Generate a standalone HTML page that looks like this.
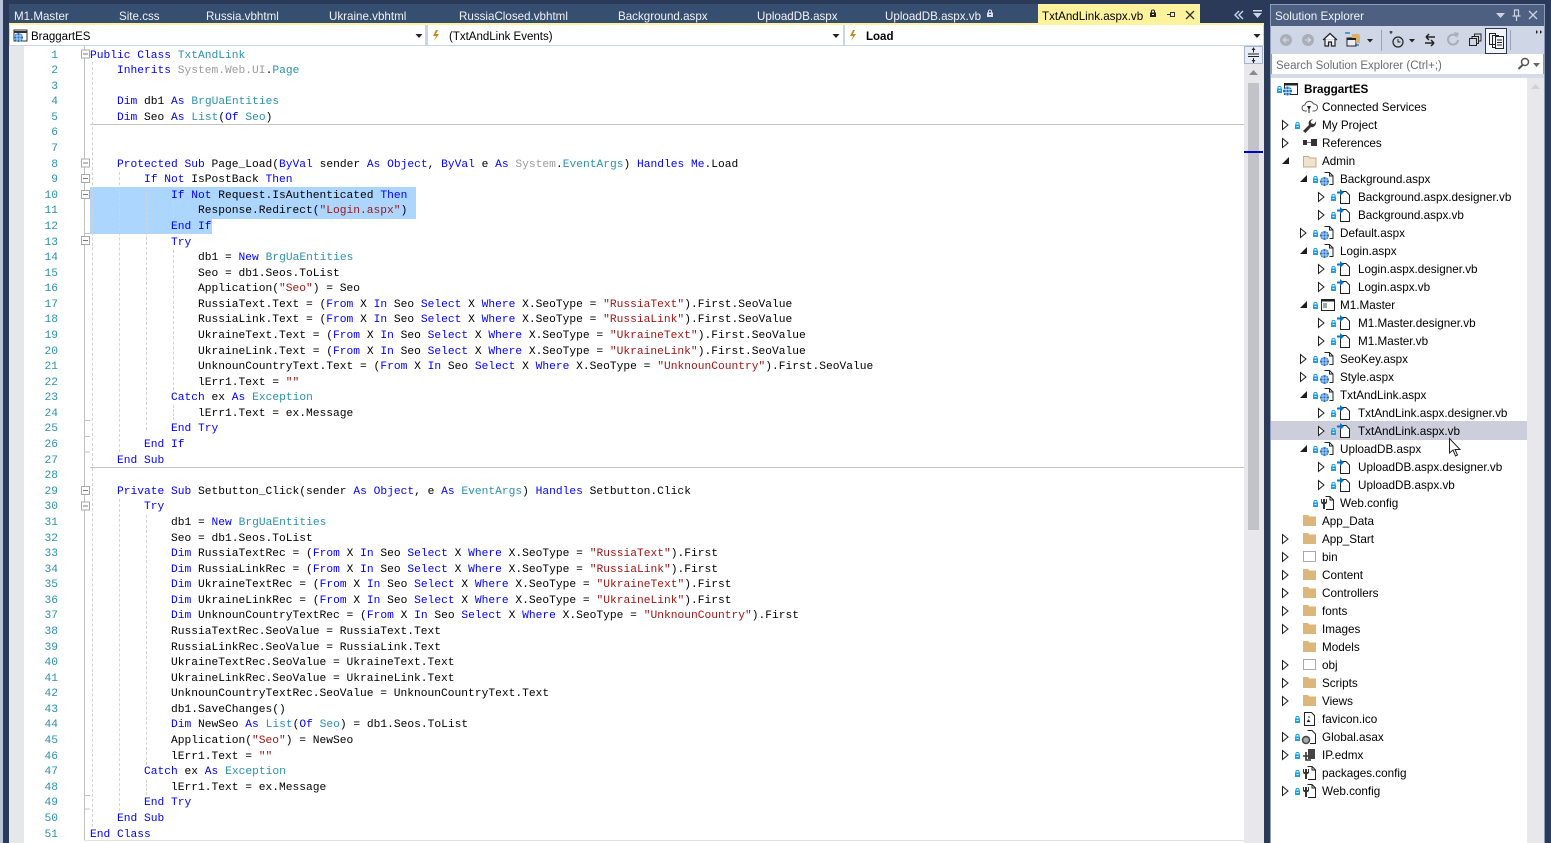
<!DOCTYPE html>
<html style="overflow:hidden;width:1551px;height:843px"><head><meta charset="utf-8"><title>TxtAndLink.aspx.vb</title>
<style>
html,body{margin:0;padding:0}
body{width:1551px;height:843px;overflow:hidden;position:relative;background:#2a3a58;font-family:"Liberation Sans",sans-serif;font-size:12px;color:#000}
.a{position:absolute}
.tab{position:absolute;top:9px;color:#f1f2f6;font-size:11.6px;line-height:15px;white-space:nowrap}
.dd{position:absolute;top:25px;height:20px;background:#fff;line-height:20px;font-size:11.5px;white-space:nowrap}
.dd span{top:1.5px}
#code,#nums{position:absolute;top:48.6px;font:11.25px/15.58px "Liberation Mono",monospace}
#code{left:90px;color:#000}
#code div,#nums div{height:15.58px;white-space:pre}
#nums{left:24px;width:34px;text-align:right;color:#2b91af}
.k{color:#0000ff}.t{color:#2b91af}.s{color:#a31515}.g{color:#9b9b9b}
#tree{position:absolute;left:1271px;top:81px;width:256px}
#tree div{height:18px;line-height:18px;white-space:nowrap;font-size:11.7px;color:#000}
.l0{padding-left:33px}.l1{padding-left:51px}.l2{padding-left:69px}.l3{padding-left:87px}
.d{position:absolute;width:0;border-left:1px dashed #d4d4d4}
</style></head><body>
<div class="a" style="left:0;top:0;width:3px;height:843px;background:#b9c4da"></div>
<div class="a" style="left:9px;top:4px;width:1029px;height:19px;background:#364e6f"></div>
<div class="a" style="left:1038px;top:4px;width:162px;height:19px;background:#fff29d"></div>
<div class="a" style="left:9px;top:23px;width:1255px;height:2px;background:#fff29d"></div>
<div class="tab" style="left:14px">M1.Master</div>
<div class="tab" style="left:119px">Site.css</div>
<div class="tab" style="left:206px">Russia.vbhtml</div>
<div class="tab" style="left:329px">Ukraine.vbhtml</div>
<div class="tab" style="left:459px">RussiaClosed.vbhtml</div>
<div class="tab" style="left:618px">Background.aspx</div>
<div class="tab" style="left:757px">UploadDB.aspx</div>
<div class="tab" style="left:885px">UploadDB.aspx.vb</div>
<div class="tab" style="left:1042px;color:#000">TxtAndLink.aspx.vb</div>

<div class="a" style="left:9px;top:25px;width:1255px;height:21px;background:#ccd5e8"></div>
<div class="dd" style="left:10px;width:415px"><span class="a" style="left:21px">BraggartES</span></div>
<div class="dd" style="left:428px;width:415px"><span class="a" style="left:21px">(TxtAndLink Events)</span></div>
<div class="dd" style="left:845px;width:418px"><span class="a" style="left:21px"><b style="font-weight:bold">Load</b></span></div>

<div class="a" style="left:9px;top:46px;width:1235px;height:797px;background:#fff"></div>
<div class="a" style="left:9px;top:46px;width:15px;height:797px;background:#e6e7e8"></div>
<div class="a" style="left:90px;top:187px;width:326px;height:31.5px;background:#add6ff"></div>
<div class="a" style="left:90px;top:218.5px;width:122px;height:15.5px;background:#add6ff"></div>
<div class="a" style="left:90px;top:124px;width:1154px;height:1px;background:#c4c4c4"></div>
<div class="a" style="left:90px;top:467px;width:1154px;height:1px;background:#c4c4c4"></div>
<div class="a" style="left:84px;top:46px;width:1px;height:795px;background:#c0c0c0"></div>
<div class="a" style="left:84px;top:840px;width:1160px;height:1px;background:#e2e2e2"></div>

<div class="d" style="left:92px;top:62px;height:765px"></div>
<div class="d" style="left:119px;top:172px;height:280px"></div>
<div class="d" style="left:119px;top:499px;height:312px"></div>
<div class="d" style="left:146px;top:187px;height:243px"></div>
<div class="d" style="left:146px;top:515px;height:250px"></div>
<div class="d" style="left:146px;top:780px;height:15px"></div>
<div class="d" style="left:173px;top:203px;height:15px"></div>
<div class="d" style="left:173px;top:250px;height:140px"></div>
<div class="d" style="left:173px;top:405px;height:15px"></div>

<svg class="a" style="left:0;top:0" width="1551" height="843" viewBox="0 0 1551 843">
<defs>
<g id="box"><rect x="0.5" y="0.5" width="8" height="8" fill="#fff" stroke="#a8a8a8"/><path d="M2 4.5h5" stroke="#777"/></g>
<path id="cl" d="M0.5 0.5 L6 5 L0.5 9.5Z" fill="#fff" stroke="#1e1e1e"/>
<path id="op" d="M7 0 V7 H0Z" fill="#1e1e1e"/>
<g id="lk"><path d="M1 3V2Q1 .9 2.500 .9T4 2V3" fill="none" stroke="#1ba1e2"/><path d="M0 3h5v4.500H0z" fill="#1ba1e2"/><path d="M1.500 4.500h2v1h-2z" fill="#fff"/></g>
<g id="gl"><circle cx="4.5" cy="4.5" r="4.5" fill="#1b6fc4"/><path d="M0 3h9M0 6h9M3 0v9M6 0v9" stroke="#dcebf8" stroke-width=".8"/></g>
<g id="web"><path d="M5.500 .5H10.500L14 4V12.500H10.500M10.500 .5V4H14" fill="#fff" stroke="#222"/><use href="#gl" x="1" y="5"/></g>
<g id="vb"><path d="M4.500 2.500H9L12.500 6V14.500H3.500V6" fill="#fff" stroke="#222"/><path d="M0 3.500h4" stroke="#0e70c0" stroke-width="2"/><path d="M3 0l4 3.500-4 3.500z" fill="#0e70c0"/></g>
<g id="cfg"><path d="M5.500 .5H10L13.500 4V13.500H6M10 .5V4H13.500" fill="#fff" stroke="#222"/><path d="M1 3v3q0 2 2 2v5h2V8q2 0 2-2V3H6v3H5V3H3v3H2V3z" fill="#333"/></g>
<g id="fo"><path d="M0 2h5l1.500 1.500H13V13H0z" fill="#dcb67a"/></g>
<g id="fd"><rect x=".5" y="2.500" width="12" height="10" fill="#fff" stroke="#555" stroke-dasharray="1 1"/></g>
</defs>

<use href="#box" x="81" y="49.5"/><use href="#box" x="81" y="158.5"/><use href="#box" x="81" y="174"/><use href="#box" x="81" y="190"/><use href="#box" x="81" y="236"/><use href="#box" x="81" y="486"/><use href="#box" x="81" y="501.5"/>
<path d="M84 233.500h6M84 420.500h6M84 436.500h6M84 452h6M84 795.500h6M84 809h6" stroke="#c0c0c0"/>

<!-- tab glyphs -->
<g fill="#d9dfea"><path d="M987 12.500h6v4.500h-6z"/><path d="M988.500 12.500v-1.500q0-1 1.500-1t1.500 1v1.500" fill="none" stroke="#d9dfea"/><path d="M989 14h2v1h-2z" fill="#364e6f"/></g>
<g><path d="M1150 12.500h6v4.500h-6z" fill="#222"/><path d="M1151.500 12.500v-1.500q0-1 1.500-1t1.500 1v1.500" fill="none" stroke="#222"/><path d="M1152 14h2v1h-2z" fill="#fff29d"/></g>
<path d="M1167 14.500h3M1170.500 12v5M1170.500 12.500h4v4h-4M1174.500 12v5" stroke="#333" fill="none"/>
<path d="M1186 11l8 8M1194 11l-8 8" stroke="#333" stroke-width="1.300"/>
<path d="M1239 11l-4 4 4 4M1243 11l-4 4 4 4" stroke="#ccd5e8" stroke-width="1.400" fill="none"/>
<path d="M1253 10h9v1.500h-9zM1253 13h9l-4.500 5z" fill="#ccd5e8"/>

<!-- combo icons -->
<rect x="14" y="30" width="13" height="11" fill="#fff" stroke="#333"/><path d="M14 31h13v2H14z" fill="#333"/><use href="#gl" x="14" y="33"/>
<path d="M436 30l-3 6h3l-2 5 5-7h-3l2-4z" fill="#c88a1e"/>
<path d="M853 30l-3 6h3l-2 5 5-7h-3l2-4z" fill="#c88a1e"/>
<path d="M415.500 34h7l-3.500 4zM832.500 34h7l-3.500 4zM1253.500 34h7l-3.500 4z" fill="#222"/>

<!-- editor scrollbar -->
<rect x="1244" y="46" width="20" height="797" fill="#e8e8ec"/>
<rect x="1244.500" y="46.500" width="18" height="17" fill="#e8ecf8" stroke="#aab4c8"/>
<path d="M1248 54h11M1248 56.500h11M1253.500 47.500v5M1253.500 58v5" stroke="#222"/><path d="M1251.500 50l2-2.500 2 2.500zM1251.500 60l2 2.500 2-2.500z" fill="#222"/>
<path d="M1249 75l4.500-5 4.500 5z" fill="#8a8a96"/>
<rect x="1248" y="83" width="11" height="447" fill="#c2c3c9"/>
<rect x="1244" y="151" width="19" height="2" fill="#0000cd"/>

<!-- solution explorer frame -->
<rect x="1270" y="4" width="275" height="839" fill="#8f9dbd"/>
<rect x="1271" y="5" width="273" height="21" fill="#4d6082"/>
<rect x="1271" y="26" width="273" height="28" fill="#cfd6e5"/>
<rect x="1272" y="54" width="271" height="20" fill="#fff"/>
<rect x="1271" y="74" width="273" height="769" fill="#d6dbe9"/>
<rect x="1271" y="78" width="256" height="765" fill="#fff"/>
<rect x="1527" y="78" width="17" height="765" fill="#e8e8ec"/>
<path d="M1531 89l4.500-5 4.500 5z" fill="#d0d1d7"/>
<rect x="1271" y="421" width="256" height="19" fill="#cccedb"/>

<!-- title glyphs -->
<path d="M1496 13h9l-4.500 5z" fill="#ced4e2"/>
<path d="M1514.500 10h4v6h-4zM1512.500 16h8M1516.500 16v5" fill="none" stroke="#ced4e2" stroke-width="1.200"/>
<path d="M1529 11l8 8M1537 11l-8 8" stroke="#ced4e2" stroke-width="1.300"/>

<!-- toolbar -->
<circle cx="1286" cy="40" r="6" fill="#a9aeb9"/><path d="M1289 40h-5M1286 37.500l-2.500 2.500 2.500 2.500" stroke="#cfd6e5" fill="none" stroke-width="1.300"/>
<circle cx="1308" cy="40" r="6" fill="#a9aeb9"/><path d="M1305 40h5M1308 37.500l2.500 2.500-2.500 2.500" stroke="#cfd6e5" fill="none" stroke-width="1.300"/>
<path d="M1323 40l7-6.500 7 6.500M1325 39v7h3.500v-4h3v4h3.500v-7" fill="#f4f5f8" stroke="#222" stroke-width="1.200"/>
<rect x="1347" y="38" width="9" height="8" fill="#e9edf4" stroke="#222"/><path d="M1347 38h9v2h-9z" fill="#222"/><path d="M1352 34h7l1 2v7h-4v-5h-4z" fill="#dcb067"/><path d="M1345 33h5M1355 45h4" stroke="#0e70c0" stroke-width="1.300"/>
<path d="M1367 39h6l-3 3.500z" fill="#222"/>
<rect x="1381" y="30" width="1" height="21" fill="#9aa3b5"/>
<path d="M1391 31v3M1389.500 32h3" stroke="#222"/><circle cx="1398" cy="42" r="5" fill="none" stroke="#222" stroke-width="1.200"/><path d="M1398 39v3h2.500" stroke="#222" fill="none"/>
<path d="M1409 39h6l-3 3.500z" fill="#222"/>
<path d="M1426 37h9M1426 37l3-3M1426 37l3 3M1425 43h9M1434 43l-3-3M1434 43l-3 3" stroke="#222" stroke-width="1.500" fill="none"/>
<path d="M1456.500 36a5 5 0 1 0 1.500 4" stroke="#a9aeb9" stroke-width="2" fill="none"/><path d="M1454 32l5 1-2 5z" fill="#a9aeb9"/>
<rect x="1469.500" y="38.500" width="7" height="7" fill="none" stroke="#222"/><path d="M1472 38.500v-2h6.500v7h-2M1474.500 36v-2h6.500v7h-2" fill="none" stroke="#222"/>
<rect x="1485.500" y="28.500" width="21" height="25" fill="#f2f4f9" stroke="#2a3a58"/>
<path d="M1489.500 33.500h6v11h-6zM1492.500 35.500h6v12h-6z" fill="#f2f4f9" stroke="#222"/><rect x="1495.500" y="36.500" width="8" height="12" fill="#f2f4f9" stroke="#222"/><path d="M1497 40h5M1497 42.500h5M1497 45h5" stroke="#222"/>
<rect x="1510" y="30" width="1" height="20" fill="#9aa3b5"/>
<path d="M1536 30l2 2-2 2zM1540 30l2 2-2 2z" fill="#222"/>
<circle cx="1525" cy="62" r="3.500" fill="none" stroke="#555" stroke-width="1.500"/><path d="M1522.500 65l-4 4" stroke="#555" stroke-width="2"/>
<path d="M1533 63h7l-3.500 4z" fill="#666"/>

<!-- tree arrows: open -->
<g>
<use href="#op" x="1282" y="157"/><use href="#op" x="1300" y="175"/><use href="#op" x="1300" y="247"/><use href="#op" x="1300" y="301"/><use href="#op" x="1300" y="391"/><use href="#op" x="1300" y="445"/>
</g>
<!-- tree arrows: closed -->
<g>
<use href="#cl" x="1282" y="120"/><use href="#cl" x="1282" y="138"/><use href="#cl" x="1318" y="192"/><use href="#cl" x="1318" y="210"/><use href="#cl" x="1300" y="228"/><use href="#cl" x="1318" y="264"/><use href="#cl" x="1318" y="282"/><use href="#cl" x="1318" y="318"/><use href="#cl" x="1318" y="336"/><use href="#cl" x="1300" y="354"/><use href="#cl" x="1300" y="372"/><use href="#cl" x="1318" y="408"/><use href="#cl" x="1318" y="426"/><use href="#cl" x="1318" y="462"/><use href="#cl" x="1318" y="480"/>
<use href="#cl" x="1282" y="534"/><use href="#cl" x="1282" y="552"/><use href="#cl" x="1282" y="570"/><use href="#cl" x="1282" y="588"/><use href="#cl" x="1282" y="606"/><use href="#cl" x="1282" y="624"/><use href="#cl" x="1282" y="660"/><use href="#cl" x="1282" y="678"/><use href="#cl" x="1282" y="696"/><use href="#cl" x="1282" y="732"/><use href="#cl" x="1282" y="750"/><use href="#cl" x="1282" y="786"/>
</g>
<!-- locks -->
<g>
<use href="#lk" x="1277" y="85.500"/><use href="#lk" x="1295" y="121.500"/>
<use href="#lk" x="1313" y="175.500"/><use href="#lk" x="1331" y="193.500"/><use href="#lk" x="1331" y="211.500"/><use href="#lk" x="1313" y="229.500"/><use href="#lk" x="1313" y="247.500"/><use href="#lk" x="1331" y="265.500"/><use href="#lk" x="1331" y="283.500"/><use href="#lk" x="1313" y="301.500"/><use href="#lk" x="1331" y="319.500"/><use href="#lk" x="1331" y="337.500"/><use href="#lk" x="1313" y="355.500"/><use href="#lk" x="1313" y="373.500"/><use href="#lk" x="1313" y="391.500"/><use href="#lk" x="1331" y="409.500"/><use href="#lk" x="1331" y="427.500"/><use href="#lk" x="1313" y="445.500"/><use href="#lk" x="1331" y="463.500"/><use href="#lk" x="1331" y="481.500"/><use href="#lk" x="1313" y="499.500"/>
<use href="#lk" x="1295" y="715.500"/><use href="#lk" x="1295" y="733.500"/><use href="#lk" x="1295" y="751.500"/><use href="#lk" x="1295" y="769.500"/><use href="#lk" x="1295" y="787.500"/>
</g>
<!-- root & L1 icons -->
<rect x="1284.500" y="83.500" width="13" height="11" fill="#fff" stroke="#222"/><path d="M1284 83h14v2.500h-14z" fill="#222"/><use href="#gl" x="1283" y="86.500"/>
<path d="M1305 111a3 3 0 0 1 0-6a4.500 4.500 0 0 1 8.500-1a3.500 3.500 0 0 1 1 7h-2M1307 111h-2" fill="#fff" stroke="#555"/><path d="M1307 106h4l-1.500 3v4h-1v-4z" fill="#222"/>
<path d="M1303 131l6-6q-1.500-4 2.500-5.500l1.500-.5-2.500 2.500 1 2 2.500.5 2-2.500q.5 4-3 5.500-1 .5-2 0l-5.500 6z" fill="#333"/>
<path d="M1303 140h4v5h-4zM1311 139h6v7h-6z" fill="#333"/><path d="M1307 142.500h4" stroke="#777"/>
<path d="M1303.500 156.500h5l1.500 1.500h6v9h-12.500z" fill="#efe3cd" stroke="#c4ae87"/>

<g>
<use href="#web" x="1319" y="172"/><use href="#vb" x="1337" y="189"/><use href="#vb" x="1337" y="207"/><use href="#web" x="1319" y="226"/><use href="#web" x="1319" y="244"/><use href="#vb" x="1337" y="261"/><use href="#vb" x="1337" y="279"/>
<g><rect x="1321.500" y="299.500" width="13" height="11" fill="#fff" stroke="#222"/><path d="M1321 299h14v2.500h-14z" fill="#222"/><path d="M1323 303h4v5h-4z" fill="#9aa"/></g>
<use href="#vb" x="1337" y="315"/><use href="#vb" x="1337" y="333"/><use href="#web" x="1319" y="352"/><use href="#web" x="1319" y="370"/><use href="#web" x="1319" y="388"/><use href="#vb" x="1337" y="405"/><use href="#vb" x="1337" y="423"/><use href="#web" x="1319" y="442"/><use href="#vb" x="1337" y="459"/><use href="#vb" x="1337" y="477"/><use href="#cfg" x="1320" y="496"/>
</g>
<g>
<use href="#fo" x="1303" y="513"/><use href="#fo" x="1303" y="531"/><use href="#fd" x="1303" y="549"/><use href="#fo" x="1303" y="567"/><use href="#fo" x="1303" y="585"/><use href="#fo" x="1303" y="603"/><use href="#fo" x="1303" y="621"/><use href="#fo" x="1303" y="639"/><use href="#fd" x="1303" y="657"/><use href="#fo" x="1303" y="675"/><use href="#fo" x="1303" y="693"/>
</g>
<path d="M1304.500 712.500h7l3 3v10h-10z" fill="#fff" stroke="#222"/><path d="M1308 717h2M1307 722l1.500-2 1.500 2" stroke="#333"/>
<path d="M1307.500 730.500H1312l3.500 3.500v9.500H1310" fill="#fff" stroke="#222"/><circle cx="1306" cy="740" r="3.500" fill="#aaa" stroke="#444" stroke-width="1.500"/>
<path d="M1308 749h7v10h-7z" fill="#444"/><path d="M1303 756h5M1306 752v8h5" stroke="#333" stroke-width="1.600" fill="none"/>
<use href="#cfg" x="1302" y="766"/><use href="#cfg" x="1302" y="784"/>
<!-- cursor -->
<path d="M1449.500 438.500V453l3.500-3 2.500 6 2-1-2.500-5.500h5z" fill="#fff" stroke="#222"/>
</svg>

<div class="a" style="left:1275px;top:9px;color:#f1f3f8;font-size:11.7px;line-height:16px">Solution Explorer</div>
<div class="a" style="left:1276px;top:57.5px;color:#6d6d6d;font-size:11.5px;line-height:17px">Search Solution Explorer (Ctrl+;)</div>

<div id="nums"><div>1</div><div>2</div><div>3</div><div>4</div><div>5</div><div>6</div><div>7</div><div>8</div><div>9</div><div>10</div><div>11</div><div>12</div><div>13</div><div>14</div><div>15</div><div>16</div><div>17</div><div>18</div><div>19</div><div>20</div><div>21</div><div>22</div><div>23</div><div>24</div><div>25</div><div>26</div><div>27</div><div>28</div><div>29</div><div>30</div><div>31</div><div>32</div><div>33</div><div>34</div><div>35</div><div>36</div><div>37</div><div>38</div><div>39</div><div>40</div><div>41</div><div>42</div><div>43</div><div>44</div><div>45</div><div>46</div><div>47</div><div>48</div><div>49</div><div>50</div><div>51</div></div>

<div id="code"><div><span class="k">Public Class</span> <span class="t">TxtAndLink</span></div>
<div>    <span class="k">Inherits</span> <span class="g">System.Web.UI</span>.<span class="t">Page</span></div>
<div> </div>
<div>    <span class="k">Dim</span> db1 <span class="k">As</span> <span class="t">BrgUaEntities</span></div>
<div>    <span class="k">Dim</span> Seo <span class="k">As</span> <span class="t">List</span>(<span class="k">Of</span> <span class="t">Seo</span>)</div>
<div> </div>
<div> </div>
<div>    <span class="k">Protected Sub</span> Page_Load(<span class="k">ByVal</span> sender <span class="k">As Object</span>, <span class="k">ByVal</span> e <span class="k">As</span> <span class="g">System</span>.<span class="t">EventArgs</span>) <span class="k">Handles Me</span>.Load</div>
<div>        <span class="k">If Not</span> IsPostBack <span class="k">Then</span></div>
<div>            <span class="k">If Not</span> Request.IsAuthenticated <span class="k">Then</span></div>
<div>                Response.Redirect(<span class="s">"Login.aspx"</span>)</div>
<div>            <span class="k">End If</span></div>
<div>            <span class="k">Try</span></div>
<div>                db1 = <span class="k">New</span> <span class="t">BrgUaEntities</span></div>
<div>                Seo = db1.Seos.ToList</div>
<div>                Application(<span class="s">"Seo"</span>) = Seo</div>
<div>                RussiaText.Text = (<span class="k">From</span> X <span class="k">In</span> Seo <span class="k">Select</span> X <span class="k">Where</span> X.SeoType = <span class="s">"RussiaText"</span>).First.SeoValue</div>
<div>                RussiaLink.Text = (<span class="k">From</span> X <span class="k">In</span> Seo <span class="k">Select</span> X <span class="k">Where</span> X.SeoType = <span class="s">"RussiaLink"</span>).First.SeoValue</div>
<div>                UkraineText.Text = (<span class="k">From</span> X <span class="k">In</span> Seo <span class="k">Select</span> X <span class="k">Where</span> X.SeoType = <span class="s">"UkraineText"</span>).First.SeoValue</div>
<div>                UkraineLink.Text = (<span class="k">From</span> X <span class="k">In</span> Seo <span class="k">Select</span> X <span class="k">Where</span> X.SeoType = <span class="s">"UkraineLink"</span>).First.SeoValue</div>
<div>                UnknounCountryText.Text = (<span class="k">From</span> X <span class="k">In</span> Seo <span class="k">Select</span> X <span class="k">Where</span> X.SeoType = <span class="s">"UnknounCountry"</span>).First.SeoValue</div>
<div>                lErr1.Text = <span class="s">""</span></div>
<div>            <span class="k">Catch</span> ex <span class="k">As</span> <span class="t">Exception</span></div>
<div>                lErr1.Text = ex.Message</div>
<div>            <span class="k">End Try</span></div>
<div>        <span class="k">End If</span></div>
<div>    <span class="k">End Sub</span></div>
<div> </div>
<div>    <span class="k">Private Sub</span> Setbutton_Click(sender <span class="k">As Object</span>, e <span class="k">As</span> <span class="t">EventArgs</span>) <span class="k">Handles</span> Setbutton.Click</div>
<div>        <span class="k">Try</span></div>
<div>            db1 = <span class="k">New</span> <span class="t">BrgUaEntities</span></div>
<div>            Seo = db1.Seos.ToList</div>
<div>            <span class="k">Dim</span> RussiaTextRec = (<span class="k">From</span> X <span class="k">In</span> Seo <span class="k">Select</span> X <span class="k">Where</span> X.SeoType = <span class="s">"RussiaText"</span>).First</div>
<div>            <span class="k">Dim</span> RussiaLinkRec = (<span class="k">From</span> X <span class="k">In</span> Seo <span class="k">Select</span> X <span class="k">Where</span> X.SeoType = <span class="s">"RussiaLink"</span>).First</div>
<div>            <span class="k">Dim</span> UkraineTextRec = (<span class="k">From</span> X <span class="k">In</span> Seo <span class="k">Select</span> X <span class="k">Where</span> X.SeoType = <span class="s">"UkraineText"</span>).First</div>
<div>            <span class="k">Dim</span> UkraineLinkRec = (<span class="k">From</span> X <span class="k">In</span> Seo <span class="k">Select</span> X <span class="k">Where</span> X.SeoType = <span class="s">"UkraineLink"</span>).First</div>
<div>            <span class="k">Dim</span> UnknounCountryTextRec = (<span class="k">From</span> X <span class="k">In</span> Seo <span class="k">Select</span> X <span class="k">Where</span> X.SeoType = <span class="s">"UnknounCountry"</span>).First</div>
<div>            RussiaTextRec.SeoValue = RussiaText.Text</div>
<div>            RussiaLinkRec.SeoValue = RussiaLink.Text</div>
<div>            UkraineTextRec.SeoValue = UkraineText.Text</div>
<div>            UkraineLinkRec.SeoValue = UkraineLink.Text</div>
<div>            UnknounCountryTextRec.SeoValue = UnknounCountryText.Text</div>
<div>            db1.SaveChanges()</div>
<div>            <span class="k">Dim</span> NewSeo <span class="k">As</span> <span class="t">List</span>(<span class="k">Of</span> <span class="t">Seo</span>) = db1.Seos.ToList</div>
<div>            Application(<span class="s">"Seo"</span>) = NewSeo</div>
<div>            lErr1.Text = <span class="s">""</span></div>
<div>        <span class="k">Catch</span> ex <span class="k">As</span> <span class="t">Exception</span></div>
<div>            lErr1.Text = ex.Message</div>
<div>        <span class="k">End Try</span></div>
<div>    <span class="k">End Sub</span></div>
<div><span class="k">End Class</span></div></div>

<div id="tree">
<div class="l0"><b>BraggartES</b></div>
<div class="l1">Connected Services</div>
<div class="l1">My Project</div>
<div class="l1">References</div>
<div class="l1">Admin</div>
<div class="l2">Background.aspx</div>
<div class="l3">Background.aspx.designer.vb</div>
<div class="l3">Background.aspx.vb</div>
<div class="l2">Default.aspx</div>
<div class="l2">Login.aspx</div>
<div class="l3">Login.aspx.designer.vb</div>
<div class="l3">Login.aspx.vb</div>
<div class="l2">M1.Master</div>
<div class="l3">M1.Master.designer.vb</div>
<div class="l3">M1.Master.vb</div>
<div class="l2">SeoKey.aspx</div>
<div class="l2">Style.aspx</div>
<div class="l2">TxtAndLink.aspx</div>
<div class="l3">TxtAndLink.aspx.designer.vb</div>
<div class="l3">TxtAndLink.aspx.vb</div>
<div class="l2">UploadDB.aspx</div>
<div class="l3">UploadDB.aspx.designer.vb</div>
<div class="l3">UploadDB.aspx.vb</div>
<div class="l2">Web.config</div>
<div class="l1">App_Data</div>
<div class="l1">App_Start</div>
<div class="l1">bin</div>
<div class="l1">Content</div>
<div class="l1">Controllers</div>
<div class="l1">fonts</div>
<div class="l1">Images</div>
<div class="l1">Models</div>
<div class="l1">obj</div>
<div class="l1">Scripts</div>
<div class="l1">Views</div>
<div class="l1">favicon.ico</div>
<div class="l1">Global.asax</div>
<div class="l1">IP.edmx</div>
<div class="l1">packages.config</div>
<div class="l1">Web.config</div>
</div>
</body></html>
